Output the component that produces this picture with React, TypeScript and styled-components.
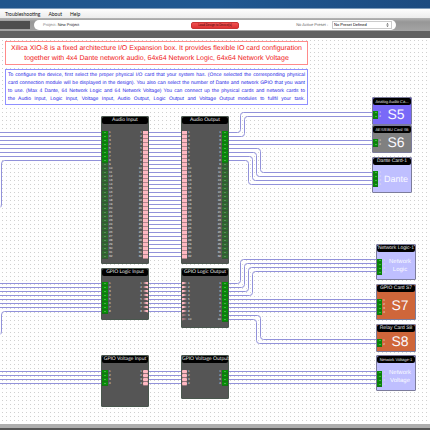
import React from "react";
import styled, { createGlobalStyle, css } from "styled-components";

const GlobalStyle = createGlobalStyle`
  * { box-sizing: border-box; }
  html, body { margin: 0; padding: 0; }
  body {
    font-family: "Liberation Sans", Arial, sans-serif;
    text-rendering: geometricPrecision;
    background: #fff;
  }
`;

const Page = styled.div`
  display: flex;
  flex-direction: column;
  min-height: 100vh;
  overflow: hidden;
`;

const TitleBar = styled.div`
  height: 9px;
  background: linear-gradient(90deg, #20558c, #205891 50%, #1c4b80);
  border-bottom: 1px solid #7f9cba;
`;

const MenuBar = styled.nav`
  display: flex;
  align-items: center;
  gap: 8px;
  height: 9px;
  padding: 0 5px;
  background: linear-gradient(#fdfdfd, #ececec);
`;

const MenuItem = styled.button`
  padding: 0;
  border: 0;
  background: none;
  font-family: Lato, "Liberation Sans", sans-serif;
  font-size: 5px;
  line-height: 8px;
  color: #111;
`;

const Toolbar = styled.header`
  display: flex;
  align-items: center;
  height: 13px;
  padding-top: 1px;
  background: linear-gradient(#b4b4b4, #979797 30%, #a4a4a4);
`;

const ToolbarWell = styled.div`
  flex: 0 0 30px;
  height: 8px;
  background: #4d4d4d;
`;

const ToolbarPill = styled.div`
  flex: 1;
  display: grid;
  grid-template-columns: 148fr 48px 153fr;
  align-items: center;
  height: 10px;
  margin: 0 34px 0 4px;
  padding: 0 4px 0 9px;
  border-radius: 5px;
  background: #fff;
`;

const Project = styled.div`
  font-size: 4px;
  line-height: 8px;
  color: #808080;
`;

const ProjectName = styled.span`
  color: #222;
`;

const LoadButton = styled.button`
  height: 7px;
  padding: 0;
  border: 1px solid #c83434;
  border-radius: 2px;
  background: linear-gradient(#f05050, #dc3232);
  font-family: inherit;
  font-size: 3px;
  line-height: 5px;
  color: #3a0606;
`;

const PresetField = styled.div`
  display: flex;
  align-items: center;
  justify-content: flex-end;
  gap: 4px;
`;

const PresetLabel = styled.label`
  font-size: 4px;
  line-height: 8px;
  color: #666;
`;

const SelectFrame = styled.div`
  display: flex;
  align-items: center;
  width: 60px;
  height: 8px;
  padding-right: 2px;
  border: 1px solid #ccc;
  background: #fff;
`;

const Select = styled.select`
  flex: 1;
  height: 6px;
  padding: 0 0 0 1px;
  border: 0;
  appearance: none;
  background: none;
  font-family: inherit;
  font-size: 4px;
  line-height: 6px;
  color: #000;
`;

const DarkStrip = styled.div`
  height: 7px;
  background: #626262;
`;

const Canvas = styled.main`
  position: relative;
  flex: 1;
  display: flex;
  flex-direction: column;
  align-items: flex-start;
  gap: 4px;
  min-height: 386px;
  padding: 3px 5px;
  background-color: #fff;
  background-image: conic-gradient(from 0deg at 1px 1px, transparent 75%, #d0d0d0 0);
  background-size: 4px 4px;
  background-position: 2px 2px;
`;

const Note = styled.div<{ $tone: "red" | "blue" }>`
  z-index: 1;
  width: 303px;
  max-width: 100%;
  border: 1px solid;
  background: #fff;
  white-space: nowrap;
  ${({ $tone }) =>
    $tone === "red"
      ? css`
          padding: 2px 3px 0;
          color: #f02020;
          border-color: #ff8a8a;
          font-size: 7px;
          line-height: 10px;
          text-align: center;
        `
      : css`
          padding: 1px 2px;
          color: #1c1ce6;
          border-color: #8f8fff;
          font-size: 5px;
          line-height: 8px;
          white-space: normal;
          text-align: justify;
          text-align-last: justify;
        `}
`;

const NoteLine = styled.div``;

const StatusBar = styled.footer`
  height: 6px;
  border-top: 4px solid #aeaeae;
  background: #555;
`;

const Wires = styled.svg`
  position: absolute;
  inset: 0;
  width: 100%;
  height: 100%;
  fill: none;
  stroke: #9292da;
`;

const NodeBox = styled.section<{ $x: number; $y: number; $h: number }>`
  position: absolute;
  left: ${(p) => p.$x}px;
  top: ${(p) => p.$y}px;
  width: 48px;
  height: ${(p) => p.$h}px;
  border: 1px solid #4a574e;
  border-radius: 1px;
  background: #555;
`;

const Title = styled.h2<{ $small?: boolean }>`
  margin: 0;
  height: 7px;
  border-radius: 2px;
  background: #000;
  color: #e4e4e4;
  font-family: Lato, "Liberation Sans", sans-serif;
  font-size: ${(p) => (p.$small ? 4 : 5)}px;
  font-weight: 400;
  line-height: 7px;
  text-align: center;
  white-space: nowrap;
`;

const CardTitle = styled(Title)`
  font-family: "Liberation Sans", Arial, sans-serif;
`;

const PortGrid = styled.div<{ $lead: number }>`
  display: flex;
  justify-content: space-between;
  padding-top: ${(p) => p.$lead}px;
`;

const PortColumn = styled.ol<{ $right?: boolean }>`
  margin: 0;
  padding: 0;
  list-style: none;
  li {
    flex-direction: ${(p) => (p.$right ? "row-reverse" : "row")};
  }
`;

const PortRow = styled.li`
  display: flex;
  align-items: center;
  gap: 1px;
  height: 4px;
  color: #e2e2e2;
  font-size: 3px;
  line-height: 4px;
`;

type PinKind = "green" | "dim" | "pink" | "arrow" | "arrowDim" | "arrowIn" | "pill";

const pinStyles: Record<PinKind, ReturnType<typeof css>> = {
  green: css`
    background: #078c07;
    box-shadow: 0 1px #147014;
  `,
  dim: css`
    background: #2f692f;
    box-shadow: 0 1px #365436;
  `,
  pink: css`
    width: 5px;
    background: #ffb8c2;
    box-shadow: 0 1px #b0858b;
  `,
  pill: css`
    width: 5px;
    border-radius: 1px;
    background: #ffb8c2;
    box-shadow: 0 1px #95757a;
  `,
  arrow: css`
    width: 5px;
    background: #ffb8c2;
    clip-path: polygon(0 0, 100% 50%, 0 100%);
  `,
  arrowIn: css`
    width: 5px;
    background: #ffb8c2;
    clip-path: polygon(100% 0, 0 50%, 100% 100%);
  `,
  arrowDim: css`
    width: 5px;
    background: #a37b80;
    clip-path: polygon(0 0, 100% 50%, 0 100%);
  `,
};

const Pin = styled.span<{ $kind: PinKind }>`
  display: flex;
  align-items: center;
  justify-content: center;
  width: 6px;
  height: 3px;
  ${(p) => pinStyles[p.$kind]}
  &::after {
    content: "";
    width: 2px;
    height: 1px;
    background: ${(p) => (p.$kind === "green" ? "#45ad45" : p.$kind === "dim" ? "#5b8c5b" : "transparent")};
  }
`;

const Card = styled.section<{ $x: number; $y: number; $h: number; $fill: string }>`
  position: absolute;
  left: ${(p) => p.$x}px;
  top: ${(p) => p.$y}px;
  display: flex;
  flex-direction: column;
  width: 40px;
  height: ${(p) => p.$h}px;
  border: 1px solid #7c7c9c;
  border-radius: 1px;
  background: ${(p) => p.$fill};
`;

const CardBody = styled.div`
  flex: 1;
  display: flex;
  align-items: flex-start;
`;

const CardLabel = styled.div<{ $size: number; $line: number }>`
  flex: 1;
  align-self: center;
  color: #fafaff;
  font-size: ${(p) => p.$size}px;
  line-height: ${(p) => p.$line}px;
  text-align: center;
`;

const CardPorts = styled(PortColumn)<{ $lead: number }>`
  width: 8px;
  padding-top: ${(p) => p.$lead}px;
`;

type NodeData = {
  title: string;
  x: number;
  y: number;
  h: number;
  lead: number;
  left: PinKind[];
  right: PinKind[];
};

const rep = (kind: PinKind, n: number): PinKind[] => Array<PinKind>(n).fill(kind);

const nodes: NodeData[] = [
  { title: "Audio Input", x: 101, y: 78, h: 148, lead: 6, left: [...rep("green", 8), ...rep("dim", 24)], right: rep("pink", 32) },
  { title: "Audio Output", x: 181, y: 78, h: 148, lead: 6, left: rep("pink", 32), right: [...rep("green", 8), ...rep("dim", 24)] },
  { title: "GPIO Logic Input", x: 101, y: 230, h: 52, lead: 5, left: rep("green", 8), right: rep("arrowIn", 8) },
  { title: "GPIO Logic Output", x: 181, y: 230, h: 60, lead: 5, left: [...rep("arrow", 8), ...rep("arrowDim", 2)], right: rep("green", 10) },
  { title: "GPIO Voltage Input", x: 101, y: 317, h: 52, lead: 6, left: rep("green", 4), right: rep("pill", 4) },
  { title: "GPIO Voltage Output", x: 181, y: 317, h: 44, lead: 6, left: rep("pill", 4), right: rep("green", 4) },
];

type CardData = {
  title: string;
  small?: boolean;
  lines: string[];
  size: number;
  line: number;
  x: number;
  y: number;
  h: number;
  lead: number;
  ports: number;
  fill: string;
};

const cards: CardData[] = [
  { title: "Analog Audio Ca...", small: true, lines: ["S5"], size: 14, line: 15, x: 372, y: 59, h: 28, lead: 5, ports: 2, fill: "#7969f8" },
  { title: "AES/EBU Card S6", small: true, lines: ["S6"], size: 14, line: 15, x: 372, y: 87, h: 28, lead: 5, ports: 2, fill: "#808080" },
  { title: "Dante Card-1", lines: ["Dante"], size: 9, line: 10, x: 372, y: 119, h: 36, lead: 5, ports: 4, fill: "#bfbfff" },
  { title: "Network Logic-1", lines: ["Network", "Logic"], size: 6, line: 8, x: 376, y: 206, h: 36, lead: 6, ports: 4, fill: "#bfbfff" },
  { title: "GPIO Card S7", lines: ["S7"], size: 14, line: 15, x: 376, y: 246, h: 36, lead: 6, ports: 4, fill: "#cf663a" },
  { title: "Relay Card S8", lines: ["S8"], size: 14, line: 15, x: 376, y: 286, h: 28, lead: 6, ports: 2, fill: "#cf663a" },
  { title: "Network Voltage-1", small: true, lines: ["Network", "Voltage"], size: 6, line: 8, x: 376, y: 317, h: 36, lead: 7, ports: 4, fill: "#bfbfff" },
];

const straight = (x1: number, x2: number, y: number, n: number) =>
  Array.from({ length: n }, (_, i) => `M${x1} ${y + i * 4}H${x2}`);

const bend = (x1: number, y1: number, mid: number, y2: number, x2: number) => {
  const d = y2 > y1 ? 3 : -3;
  return `M${x1} ${y1}H${mid - 3}Q${mid} ${y1} ${mid} ${y1 + d}V${y2 - d}Q${mid} ${y2} ${mid + 3} ${y2}H${x2}`;
};

const wires = [
  ...straight(0, 101, 94.5, 7),
  "M101 122.5H4.5Q1.5 122.5 1.5 126V166Q1.5 169 0 169.5",
  ...straight(149, 181, 94.5, 32),
  bend(229, 94.5, 240.5, 74.5, 372),
  bend(229, 98.5, 244.5, 78.5, 372),
  ...straight(229, 372, 102.5, 2),
  bend(229, 110.5, 260.5, 134.5, 372),
  bend(229, 114.5, 256.5, 138.5, 372),
  bend(229, 118.5, 252.5, 142.5, 372),
  bend(229, 122.5, 248.5, 146.5, 372),
  ...straight(0, 101, 245.5, 7),
  "M101 273.5H4.5Q1.5 273.5 1.5 277V293Q1.5 296 0 296.5",
  ...straight(149, 181, 245.5, 8),
  bend(229, 245.5, 240.5, 221.5, 376),
  bend(229, 249.5, 244.5, 225.5, 376),
  bend(229, 253.5, 248.5, 229.5, 376),
  bend(229, 257.5, 252.5, 233.5, 376),
  ...straight(229, 376, 261.5, 4),
  bend(229, 277.5, 260.5, 301.5, 376),
  bend(229, 281.5, 256.5, 305.5, 376),
  ...straight(0, 101, 333.5, 4),
  ...straight(149, 181, 333.5, 4),
  ...straight(229, 376, 333.5, 4),
];

const redNote = [
  "Xilica XIO-8 is a fixed architecture I/O Expansion box. It provides flexible IO card configuration",
  "together with 4x4 Dante network audio, 64x64 Network Logic, 64x64 Network Voltage",
];

const blueNote = [
  "To configure the device, first select the proper physical I/O card that your system has. (Once selected the corresponding physical",
  "card connection module will be displayed in the design). You also can select the number of Dante and network GPIO that you want",
  "to use. (Max 4 Dante, 64 Network Logic and 64 Network Voltage)  You can connect up the physical cards and network cards to",
  "the Audio Input, Logic Input, Voltage Input, Audio Output, Logic Output and Voltage Output modules to fullfil your task.",
];

function Ports({ kinds, right }: { kinds: PinKind[]; right?: boolean }) {
  return (
    <PortColumn $right={right}>
      {kinds.map((kind, i) => (
        <PortRow key={i}>
          <Pin $kind={kind} />
          {i + 1}
        </PortRow>
      ))}
    </PortColumn>
  );
}

export default function App() {
  return (
    <Page>
      <GlobalStyle />
      <TitleBar />
      <MenuBar>
        <MenuItem>Troubleshooting</MenuItem>
        <MenuItem>About</MenuItem>
        <MenuItem>Help</MenuItem>
      </MenuBar>
      <Toolbar>
        <ToolbarWell />
        <ToolbarPill>
          <Project>
            Project: <ProjectName>New Project</ProjectName>
          </Project>
          <LoadButton>Load Design to Device(s)</LoadButton>
          <PresetField>
            <PresetLabel htmlFor="preset">No Active Preset :</PresetLabel>
            <SelectFrame>
              <Select id="preset">
                <option>No Preset Defined</option>
              </Select>
              <svg width="3" height="4" viewBox="0 0 3 5" fill="#555" aria-hidden="true">
                <path d="M0 2L1.5 0L3 2ZM0 3L1.5 5L3 3Z" />
              </svg>
            </SelectFrame>
          </PresetField>
        </ToolbarPill>
      </Toolbar>
      <DarkStrip />
      <Canvas>
        <Wires aria-hidden="true">
          {wires.map((d, i) => (
            <path key={i} d={d} />
          ))}
        </Wires>
        <Note $tone="red">
          {redNote.map((t) => (
            <NoteLine key={t}>{t}</NoteLine>
          ))}
        </Note>
        <Note $tone="blue">
          {blueNote.map((t) => (
            <NoteLine key={t}>{t}</NoteLine>
          ))}
        </Note>
        {nodes.map((n) => (
          <NodeBox key={n.title} $x={n.x} $y={n.y} $h={n.h}>
            <Title>{n.title}</Title>
            <PortGrid $lead={n.lead}>
              <Ports kinds={n.left} />
              <Ports kinds={n.right} right />
            </PortGrid>
          </NodeBox>
        ))}
        {cards.map((c) => (
          <Card key={c.title} $x={c.x} $y={c.y} $h={c.h} $fill={c.fill}>
            <CardTitle $small={c.small}>{c.title}</CardTitle>
            <CardBody>
              <CardPorts $lead={c.lead}>
                {rep("green", c.ports).map((kind, i) => (
                  <PortRow key={i}>
                    <Pin $kind={kind} />
                    {i + 1}
                  </PortRow>
                ))}
              </CardPorts>
              <CardLabel $size={c.size} $line={c.line}>
                {c.lines.map((l) => (
                  <div key={l}>{l}</div>
                ))}
              </CardLabel>
            </CardBody>
          </Card>
        ))}
      </Canvas>
      <StatusBar />
    </Page>
  );
}
